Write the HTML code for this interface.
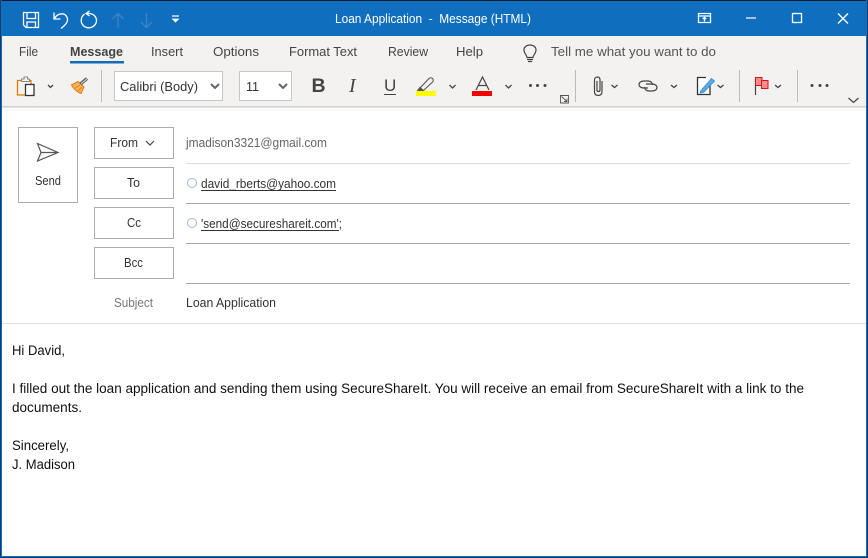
<!DOCTYPE html>
<html><head><meta charset="utf-8"><title>Loan Application - Message (HTML)</title>
<style>
html,body{margin:0;padding:0;width:868px;height:558px;overflow:hidden;background:#fff}
svg{display:block}
text{font-family:"Liberation Sans",sans-serif;font-size:12.5px;fill:#444}
.tab{fill:#444;font-size:13px}
.b{font-size:13.5px;fill:#111}
.l{font-size:12.5px;fill:#333}
.w{fill:none;stroke:#fff;stroke-width:1.3}
.d{fill:none;stroke:#444;stroke-width:1.2}
.c{fill:none;stroke:#444;stroke-width:1.3}
.box{fill:#fff;stroke:#ababab;stroke-width:1}
.sel{fill:#fff;stroke:#c8c6c4;stroke-width:1}
</style></head>
<body>
<svg width="868" height="558" viewBox="0 0 868 558" xmlns="http://www.w3.org/2000/svg">
<rect width="868" height="558" fill="#fff"/>
<rect x="0" y="0" width="868" height="36" fill="#106ebe"/>
<rect x="0" y="0" width="868" height="1" fill="#0a1a2a"/>
<rect x="2" y="36" width="864" height="70" fill="#f3f2f1"/>
<rect x="2" y="106" width="864" height="1.5" fill="#d2d0ce"/>
<rect x="2" y="107.500" width="864" height="4" fill="#fafafa"/>
<rect x="0" y="0" width="2" height="558" fill="#106ebe"/>
<rect x="866" y="0" width="2" height="558" fill="#106ebe"/>
<rect x="0" y="556" width="868" height="2" fill="#106ebe"/>
<rect x="0" y="0" width="1" height="558" fill="#0c3c68"/>
<rect x="867" y="0" width="1" height="558" fill="#0c3c68"/>
<rect x="0" y="557" width="868" height="1" fill="#0c3c68"/>

<!-- QAT -->
<path class="w" d="M23.500 12.500H38.500V27.500H26L23.500 25ZM27 12.500V18.500H35.500V12.500M27 27.500V22H35.500V27.500"/>
<path class="w" d="M54 12.500V19H60.500M54 19C56 15.500 59 13.800 62 13.800C65.500 13.800 67.500 16.800 67.500 20C67.500 23 65 25.500 61 28.500"/>
<path class="w" d="M84.500 14C82.500 15.500 81.200 18 81.200 20.500C81.200 24.500 84.500 27.800 88.800 27.800C93 27.800 96.500 24.500 96.500 20.500C96.500 16.500 93 13.500 89 13.500H85.500M89.500 11L86 13.500L89.500 16"/>
<path d="M118 27.500V13.500M112.500 19L118 13.500L123.500 19" fill="none" stroke="#3d86c8" stroke-width="1.300"/>
<path d="M146.500 13V27.500M141 22L146.500 27.500L152 22" fill="none" stroke="#3d86c8" stroke-width="1.300"/>
<path d="M172 16H179" stroke="#fff" stroke-width="1.200"/>
<path d="M172.500 19L175.500 22L178.500 19Z" fill="#fff" stroke="#fff" stroke-width="0.800"/>
<text x="335" y="23" textLength="196" lengthAdjust="spacingAndGlyphs" style="fill:#fff;font-size:13px" xml:space="preserve">Loan Application  -  Message (HTML)</text>

<!-- Window controls -->
<path class="w" d="M698.500 13.500H710.500V22.500H698.500ZM698.500 16H710.500M704.500 21.500V17.500M702.800 19L704.500 17.300L706.200 19"/>
<path d="M746 18H756" stroke="#fff" stroke-width="1.200"/>
<rect x="792.500" y="13.500" width="9" height="9" class="w"/>
<path d="M838 13.500L848 23.500M848 13.500L838 23.500" class="w"/>

<!-- Tabs -->
<text class="tab" x="19" y="56" textLength="19" lengthAdjust="spacingAndGlyphs">File</text>
<text class="tab" x="70" y="56" textLength="53" style="font-weight:bold;fill:#444" lengthAdjust="spacingAndGlyphs">Message</text>
<rect x="70" y="61" width="54" height="2.500" fill="#106ebe"/>
<text class="tab" x="151" y="56" textLength="32" lengthAdjust="spacingAndGlyphs">Insert</text>
<text class="tab" x="213" y="56" textLength="46" lengthAdjust="spacingAndGlyphs">Options</text>
<text class="tab" x="289" y="56" textLength="68" lengthAdjust="spacingAndGlyphs">Format Text</text>
<text class="tab" x="388" y="56" textLength="40" lengthAdjust="spacingAndGlyphs">Review</text>
<text class="tab" x="456" y="56" textLength="27" lengthAdjust="spacingAndGlyphs">Help</text>
<path class="d" d="M527 57.500C527 55 524 53.500 524 50C524 47 526.500 45 530 45C533.500 45 536 47 536 50C536 53.500 533 55 533 57.500ZM527 59.500H533M528 61.500H532"/>
<text class="tab" x="551" y="56" textLength="165" lengthAdjust="spacingAndGlyphs" style="fill:#555">Tell me what you want to do</text>

<!-- Ribbon row -->
<path d="M21.500 80.500H17.500V95H25" fill="none" stroke="#e07b00" stroke-width="1.300"/>
<path d="M27 80.500H31V84" fill="none" stroke="#e07b00" stroke-width="1.300"/>
<path d="M21.500 81.500V79H24V77H27.500V79H29.500V81.500Z" fill="#f3f2f1" stroke="#888"/>
<rect x="25.500" y="84.500" width="8.500" height="11" fill="#fff" stroke="#333" stroke-width="1.300"/>
<path d="M48 85L50.500 87.500L53 85" class="c"/>
<path d="M71.500 85L78 81.500L84 87L81 93.500C77 92 74 89.500 71.500 85Z" fill="#f7b267" stroke="#e07b00"/>
<path d="M75 88L80 85M78 91L82 87" stroke="#e07b00" stroke-width="0.900"/>
<path d="M80.500 84L87 78.500" stroke="#555" stroke-width="3.200"/>
<path d="M81 83.800L87 78.700" stroke="#ddd" stroke-width="1"/>
<rect x="101" y="70" width="1" height="32" fill="#bdbbb9"/>

<rect x="114.500" y="71.500" width="108" height="29" class="sel"/>
<text x="120" y="91" textLength="78" lengthAdjust="spacingAndGlyphs" style="font-size:13px;fill:#333">Calibri (Body)</text>
<path d="M211 84L215 88L219 84" fill="none" stroke="#666" stroke-width="2"/>
<rect x="239.500" y="71.500" width="52" height="29" class="sel"/>
<text x="246" y="91" textLength="13" lengthAdjust="spacingAndGlyphs" style="font-size:13px;fill:#333">11</text>
<path d="M279 84L283 88L287 84" fill="none" stroke="#666" stroke-width="2"/>

<text x="311.500" y="92" style="font-size:19.500px;font-weight:bold;fill:#444">B</text>
<text x="349" y="92" style="font-family:'Liberation Serif',serif;font-size:20px;font-style:italic;fill:#444">I</text>
<text x="384" y="91" style="font-size:17px;fill:#444">U</text>
<rect x="384" y="94" width="12" height="1" fill="#444"/>
<path d="M420 88L429 78.500C430 77.500 431.500 77.500 432.500 78.500C433.500 79.500 433.500 81 432.500 82L423.500 90.500H418Z" fill="#f3f2f1" stroke="#555" stroke-width="1.100"/>
<path d="M417 90.500L420 86.500L423.500 90Z" fill="#555"/>
<rect x="416" y="91" width="20" height="5" fill="#ffff00"/>
<path d="M449.500 85L452.500 88L455.500 85" class="c"/>
<path d="M476 90L482.500 77L489 90M478.500 85.500H486.500" fill="none" stroke="#444" stroke-width="1.200"/>
<rect x="472" y="91" width="20" height="5" fill="#f00000"/>
<path d="M505.500 85L508.500 88L511.500 85" class="c"/>
<circle cx="530.500" cy="85.500" r="1.500" fill="#444"/><circle cx="537.500" cy="85.500" r="1.500" fill="#444"/><circle cx="545" cy="85.500" r="1.500" fill="#444"/>
<path d="M560.500 95.500H568.500V103H560.500ZM561.500 96.500L567 101.500M567 98.500V101.500H564" fill="none" stroke="#555" stroke-width="0.900"/>
<rect x="575" y="70" width="1" height="32" fill="#bdbbb9"/>

<path class="d" d="M602 81V91.500C602 94 600.500 95.500 598 95.500C595.500 95.500 594.500 94 594.500 91.500V80C594.500 78 596 77 597.500 77C599 77 600 78 600 80V90C600 91 599.500 91.500 598.500 91.500C597.500 91.500 597 91 597 90V81"/>
<path d="M611.500 85L614.500 87.500L617.500 85" class="c"/>
<path class="d" d="M648 88H644C641 88 639 86.500 639 84.500C639 82.500 641 81 644 81H648C651 81 652.500 83 652.500 85"/>
<path class="d" d="M646 84H652C655 84 657 85.500 657 87.500C657 89.500 655 91 652 91H649C646 91 644.500 89 644.500 87"/>
<path d="M671 85L674 87.500L677 85" class="c"/>
<path d="M710 82V94.500H697.500V77.500H706" fill="#fff" stroke="#333" stroke-width="1.300"/>
<path d="M701 90.500L711.500 78.500L714.500 81L703.500 92.500L700 93Z" fill="#5aa9e0" stroke="#2b88d8" stroke-width="0.800"/>
<path d="M717.500 85L720.500 87.500L723.500 85" class="c"/>
<rect x="739" y="70" width="1" height="32" fill="#bdbbb9"/>
<path d="M755.500 95V77.500" stroke="#444" stroke-width="1.200"/>
<rect x="755.500" y="77.500" width="6.500" height="8" fill="#f88" stroke="#c8191c"/>
<rect x="761.500" y="80.500" width="6.500" height="8" fill="#f88" stroke="#c8191c"/>
<path d="M775 85L778 87.500L781 85" class="c"/>
<rect x="797" y="70" width="1" height="32" fill="#bdbbb9"/>
<circle cx="812" cy="85.500" r="1.500" fill="#444"/><circle cx="820" cy="85.500" r="1.500" fill="#444"/><circle cx="827" cy="85.500" r="1.500" fill="#444"/>
<path d="M848.500 98L853.500 102.500L858.500 98" fill="none" stroke="#444" stroke-width="1.200"/>

<!-- Send -->
<rect x="18.500" y="127.500" width="59" height="75" class="box"/>
<path d="M37.500 143.500L58 152.500L37.500 161L41 152.500ZM41 152.500H58" fill="none" stroke="#555" stroke-width="1.200"/>
<text x="35" y="185" textLength="26" lengthAdjust="spacingAndGlyphs" class="l">Send</text>

<!-- Buttons -->
<rect x="94.500" y="127.500" width="79" height="31" class="box"/>
<text x="110" y="147" textLength="28" lengthAdjust="spacingAndGlyphs" class="l">From</text>
<path d="M146 141L150 145L154 141" fill="none" stroke="#444" stroke-width="1.200"/>
<rect x="94.500" y="167.500" width="79" height="31" class="box"/>
<text x="127" y="187" textLength="13" lengthAdjust="spacingAndGlyphs" class="l">To</text>
<rect x="94.500" y="207.500" width="79" height="31" class="box"/>
<text x="127" y="227" textLength="14" lengthAdjust="spacingAndGlyphs" class="l">Cc</text>
<rect x="94.500" y="247.500" width="79" height="31" class="box"/>
<text x="124" y="267" textLength="19" lengthAdjust="spacingAndGlyphs" class="l">Bcc</text>
<text x="114" y="307" textLength="39" lengthAdjust="spacingAndGlyphs" style="font-size:12.5px;fill:#777">Subject</text>

<!-- Fields -->
<text x="186" y="147" textLength="141" lengthAdjust="spacingAndGlyphs" style="font-size:12.5px;fill:#666">jmadison3321@gmail.com</text>
<rect x="186" y="163" width="664" height="1" fill="#dcdcdc"/>
<circle cx="192" cy="183" r="4.500" fill="#fff" stroke="#a0bccf"/>
<text x="201" y="188" textLength="135" lengthAdjust="spacingAndGlyphs" class="l">david_rberts@yahoo.com</text>
<rect x="201" y="190" width="135" height="1" fill="#333"/>
<rect x="186" y="203" width="664" height="1" fill="#a6a6a6"/>
<circle cx="192" cy="223" r="4.500" fill="#fff" stroke="#a0bccf"/>
<text x="201" y="228" textLength="141" lengthAdjust="spacingAndGlyphs" class="l">'send@secureshareit.com';</text>
<rect x="201" y="230" width="138" height="1" fill="#333"/>
<rect x="186" y="243" width="664" height="1" fill="#a6a6a6"/>
<rect x="186" y="283" width="664" height="1" fill="#a6a6a6"/>
<text x="186" y="307" textLength="90" lengthAdjust="spacingAndGlyphs" class="l">Loan Application</text>
<rect x="2" y="323" width="864" height="1" fill="#e1dfdd"/>

<!-- Body -->
<text class="b" x="12" y="355" textLength="53" lengthAdjust="spacingAndGlyphs">Hi David,</text>
<text class="b" x="12" y="393" textLength="792" lengthAdjust="spacingAndGlyphs">I filled out the loan application and sending them using SecureShareIt. You will receive an email from SecureShareIt with a link to the</text>
<text class="b" x="12" y="412" textLength="70" lengthAdjust="spacingAndGlyphs">documents.</text>
<text class="b" x="12" y="450" textLength="57" lengthAdjust="spacingAndGlyphs">Sincerely,</text>
<text class="b" x="12" y="469" textLength="63" lengthAdjust="spacingAndGlyphs">J. Madison</text>
</svg>
</body></html>
